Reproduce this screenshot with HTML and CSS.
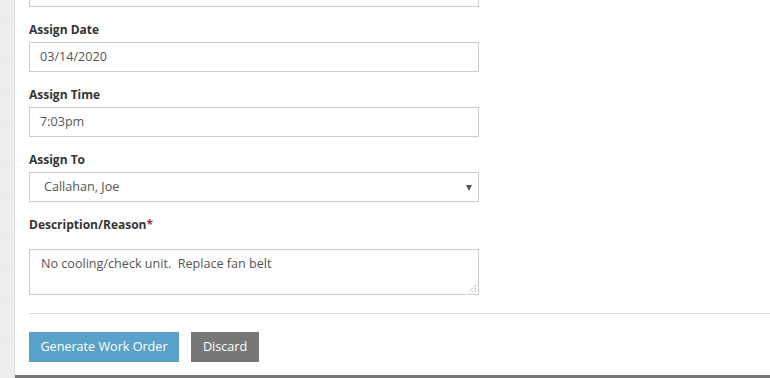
FILE: index.html
```html
<!DOCTYPE html>
<html>
<head>
<meta charset="utf-8">
<link rel="stylesheet" href="styles.css">
</head>
<body>
<div class="page">
  <aside class="side">
    <div class="side-line"></div>
    <div class="side-line"></div>
    <div class="side-line"></div>
    <div class="side-line"></div>
    <div class="side-line"></div>
    <div class="side-line"></div>
    <div class="side-line"></div>
    <div class="side-line"></div>
    <div class="side-line"></div>
    <div class="side-line"></div>
  </aside>
  <main class="panel">
    <div class="form">
      <div class="field top"><div class="input cut"></div></div>
      <div class="field">
        <label class="label">Assign Date</label>
        <div class="input">03/14/2020</div>
      </div>
      <div class="field">
        <label class="label">Assign Time</label>
        <div class="input">7:03pm</div>
      </div>
      <div class="field">
        <label class="label">Assign To</label>
        <div class="input select"><span class="sel-text">Callahan, Joe</span><span class="caret"></span></div>
      </div>
      <div class="field">
        <label class="label desc">Description/Reason<span class="req">*</span></label>
        <div class="input textarea">No cooling/check unit.&nbsp; Replace fan belt
          <svg class="grip" width="9" height="9" viewBox="0 0 9 9"><path d="M8 1 L1 8 M8 4 L4 8 M8 7 L7 8" stroke="#888" stroke-width="1" fill="none" stroke-dasharray="1 1"/></svg>
        </div>
      </div>
    </div>
    <hr class="rule">
    <div class="actions">
      <button class="btn primary">Generate Work Order</button>
      <button class="btn secondary">Discard</button>
    </div>
    <div class="bottom-bar"></div>
  </main>
</div>
</body>
</html>
```
FILE: styles.css
```css
* { box-sizing: border-box; }
html, body { margin: 0; padding: 0; background: #fff; }
body { font-family: "Open Sans", "Liberation Sans", sans-serif; color: #333; width: 770px; height: 378px; overflow: hidden; }
.page { display: flex; height: 378px; overflow: hidden; }
.side { width: 15px; flex: none; background: #ededed; border-right: 1px solid #dcdcdc; padding-top: 22px; display: flex; flex-direction: column; gap: 34px; }
.side-line { height: 1px; background: #e2ecf6; width: 13px; }
.panel { flex: 1; display: flex; flex-direction: column; position: relative; }
.form { padding-left: 14px; width: 464px; }
.field { margin-top: 14px; }
.field.top { margin-top: -23px; }
.label { display: block; font-weight: 700; font-size: 12px; line-height: 17px; height: 17px; margin-bottom: 4px; color: #333; }
.label.desc { margin-bottom: 16px; }
.req { color: #8a3a3a; }
.input { width: 450px; height: 30px; border: 1px solid #ccc; font-size: 12.6px; line-height: 28px; padding: 0 10px; color: #555; }
.select { display: flex; justify-content: space-between; align-items: center; padding: 0 6px 0 14px; }
.caret { width: 0; height: 0; border-left: 3.5px solid transparent; border-right: 3.5px solid transparent; border-top: 6px solid #555; margin-top: 1px; }
.textarea { height: 46px; line-height: 16px; padding: 6px 11px; position: relative; }
.grip { position: absolute; right: 1px; bottom: 1px; }
.rule { border: 0; border-top: 1px solid #ddd; margin: 18px 0 0 14px; }
.actions { display: flex; gap: 12px; padding-left: 14px; margin-top: 18px; }
.btn { font-family: "Open Sans", "Liberation Sans", sans-serif; font-size: 12.6px; height: 30px; border: 0; color: #fff; padding: 0; line-height: 30px; white-space: nowrap; text-align: center; }
.primary { background: #58a2c9; width: 150px; }
.secondary { background: #777; width: 68px; }
.bottom-bar { position: absolute; left: 0; right: 0; bottom: 0; height: 3px; background: #777; }
```
